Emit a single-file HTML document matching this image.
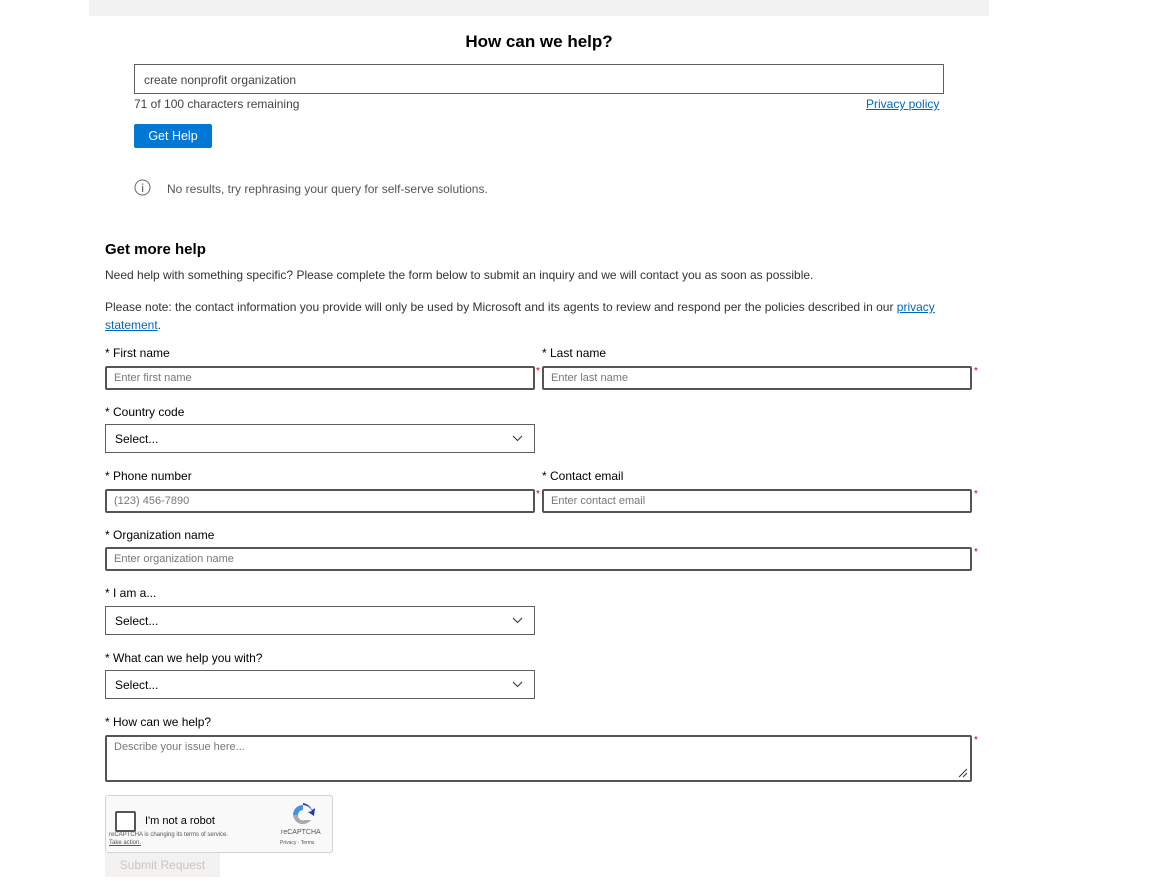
<!DOCTYPE html><html><head><style>
*{box-sizing:border-box;margin:0;padding:0}
body{width:1168px;height:886px;background:#fff;font-family:"Liberation Sans",sans-serif;color:#323130;position:relative;overflow:hidden;font-size:12px}
.a{position:absolute}
.lbl{position:absolute;font-size:12px;color:#000}
.inp{position:absolute;border:2px solid #555;border-radius:2px;height:24px;font-size:11px;color:#777;padding:4px 7px}
.sel{position:absolute;border:1px solid #605e5c;height:29px;font-size:12px;color:#000;padding:7px 9px;width:430px;left:105px}
.sel svg{position:absolute;right:11px;top:10px}
.st{position:absolute;color:#c00;font-size:10px}
</style></head><body>
<div class="a" style="left:89px;top:0;width:900px;height:16px;background:#f2f2f2"></div>
<div class="a" style="left:0;width:1078px;top:32px;text-align:center;font-size:17px;font-weight:bold;color:#000">How can we help?</div>
<div class="a" style="left:134px;top:64px;width:810px;height:30px;border:1px solid #605e5c;padding:8px 9px;font-size:12px;color:#444">create nonprofit organization</div>
<div class="a" style="left:134px;top:97px;font-size:12px;color:#444">71 of 100 characters remaining</div>
<div class="a" style="left:866px;top:97px;font-size:12px;color:#0067b8;text-decoration:underline">Privacy policy</div>
<div class="a" style="left:134px;top:124px;width:78px;height:24px;background:#0078d4;border-radius:2px;color:#fff;font-size:12.5px;text-align:center;line-height:24px">Get Help</div>
<svg class="a" style="left:134px;top:179px" width="17" height="17"><circle cx="8.5" cy="8.5" r="7.5" fill="none" stroke="#666" stroke-width="1"/><rect x="8" y="7" width="1.2" height="6" fill="#666"/><rect x="8" y="4.5" width="1.2" height="1.3" fill="#666"/></svg>
<div class="a" style="left:167px;top:182px;font-size:12px;color:#555">No results, try rephrasing your query for self-serve solutions.</div>
<div class="a" style="left:105px;top:241px;font-size:15px;font-weight:bold;color:#000">Get more help</div>
<div class="a" style="left:105px;top:268px;font-size:12px;color:#333">Need help with something specific? Please complete the form below to submit an inquiry and we will contact you as soon as possible.</div>
<div class="a" style="left:105px;top:298px;width:850px;font-size:12px;color:#333;line-height:18px">Please note: the contact information you provide will only be used by Microsoft and its agents to review and respond per the policies described in our <span style="color:#0067b8;text-decoration:underline">privacy statement</span>.</div>
<div class="lbl" style="left:105px;top:346px">* First name</div>
<div class="lbl" style="left:542px;top:346px">* Last name</div>
<div class="inp" style="left:105px;top:366px;width:430px">Enter first name</div><div class="st" style="left:536px;top:366px">*</div>
<div class="inp" style="left:542px;top:366px;width:430px">Enter last name</div><div class="st" style="left:974px;top:366px">*</div>
<div class="lbl" style="left:105px;top:405px">* Country code</div>
<div class="sel" style="top:424px">Select...<svg width="11" height="7"><path d="M1 1l4.5 4.5L10 1" fill="none" stroke="#333"/></svg></div>
<div class="lbl" style="left:105px;top:469px">* Phone number</div>
<div class="lbl" style="left:542px;top:469px">* Contact email</div>
<div class="inp" style="left:105px;top:489px;width:430px">(123) 456-7890</div><div class="st" style="left:536px;top:489px">*</div>
<div class="inp" style="left:542px;top:489px;width:430px">Enter contact email</div><div class="st" style="left:974px;top:489px">*</div>
<div class="lbl" style="left:105px;top:528px">* Organization name</div>
<div class="inp" style="left:105px;top:547px;width:867px">Enter organization name</div><div class="st" style="left:974px;top:547px">*</div>
<div class="lbl" style="left:105px;top:586px">* I am a...</div>
<div class="sel" style="top:606px">Select...<svg width="11" height="7"><path d="M1 1l4.5 4.5L10 1" fill="none" stroke="#333"/></svg></div>
<div class="lbl" style="left:105px;top:651px">* What can we help you with?</div>
<div class="sel" style="top:670px">Select...<svg width="11" height="7"><path d="M1 1l4.5 4.5L10 1" fill="none" stroke="#333"/></svg></div>
<div class="lbl" style="left:105px;top:715px">* How can we help?</div>
<div class="inp" style="left:105px;top:735px;width:867px;height:47px">Describe your issue here...<svg class="a" style="right:2px;bottom:2px" width="10" height="10"><path d="M9 1L1 9M9 5L5 9" stroke="#333"/></svg></div><div class="st" style="left:974px;top:735px">*</div>
<div class="a" style="left:105px;top:795px;width:228px;height:58px;background:#f9f9f9;border:1px solid #d3d3d3;border-radius:3px">
<div class="a" style="left:9px;top:15px;width:21px;height:21px;border:2px solid #555;border-radius:2px;background:#fff"></div>
<div class="a" style="left:39px;top:19px;font-size:11px;color:#000">I'm not a robot</div>
<div class="a" style="left:3px;top:36px;font-size:6px;color:#555">reCAPTCHA is changing its terms of service.</div>
<div class="a" style="left:3px;top:44px;font-size:6px;color:#555;text-decoration:underline">Take action.</div>
<svg class="a" style="left:184px;top:6px" width="26" height="26"><path d="M13 3a10 10 0 0 1 9 6l-4 1 6 4 1-8-3 2A12 12 0 0 0 13 1z" fill="#1c3aa9"/><path d="M3 13A10 10 0 0 1 13 3v5a5 5 0 0 0-5 5z" fill="#4a90e2"/><path d="M3 13a10 10 0 0 0 18 5h-6a5 5 0 0 1-7-5z" fill="#aaa"/></svg>
<div class="a" style="left:175px;top:33px;font-size:7px;color:#555">reCAPTCHA</div>
<div class="a" style="left:174px;top:44px;font-size:5px;color:#555">Privacy · Terms</div>
</div>
<div class="a" style="left:105px;top:853px;width:115px;height:24px;background:#f3f2f1;color:#c8c6c4;font-size:12px;text-align:center;line-height:24px">Submit Request</div>
</body></html>
